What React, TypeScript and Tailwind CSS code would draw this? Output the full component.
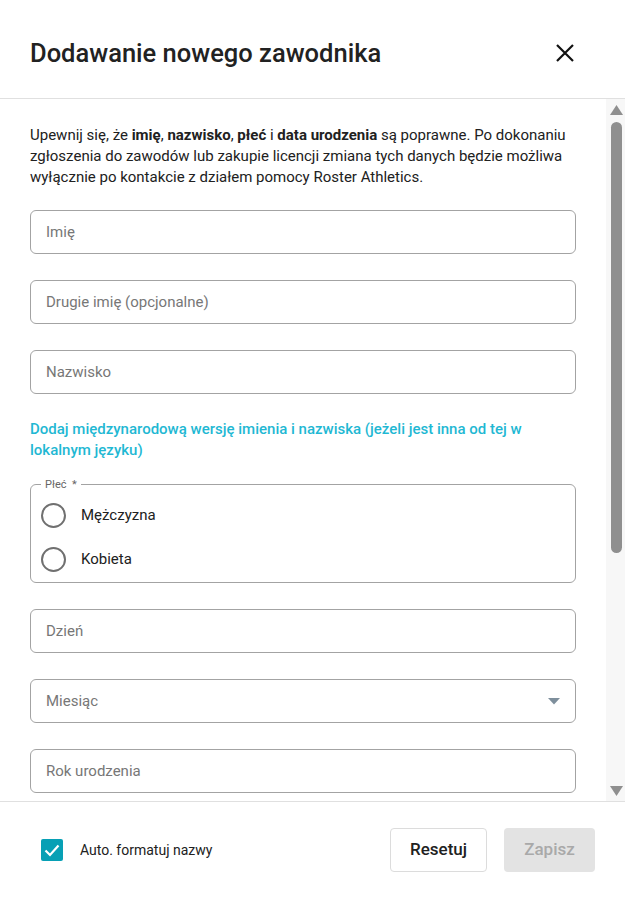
import React from "react";

const font = { fontFamily: "Roboto, 'Noto Sans', sans-serif" };

const TextField = ({ placeholder, select }: { placeholder: string; select?: boolean }) => (
  <div className="flex h-[44px] items-center rounded-[6px] border border-[#a3a3a3] pl-[15px] pr-[15px]">
    <span className="flex-1 text-[15px] text-[#777777]">{placeholder}</span>
    {select && (
      <svg width="12" height="7" viewBox="0 0 12 7">
        <path d="M0 0h12L6 6.5z" fill="#7e8f9c" />
      </svg>
    )}
  </div>
);

const Radio = ({ label }: { label: string }) => (
  <div className="flex h-[44px] items-center">
    <span className="ml-[10px] h-[25px] w-[25px] rounded-full border-2 border-[#707070]" />
    <span className="ml-[15px] text-[15px] text-[#212121]">{label}</span>
  </div>
);

const Scrollbar = () => (
  <div className="flex w-[19px] shrink-0 flex-col items-center bg-[#f7f7f7] pt-[6px] pb-[5px] pl-[1px]">
    <svg width="13" height="10" viewBox="0 0 13 10">
      <path d="M6.5 0L13 10H0z" fill="#8f8f8f" />
    </svg>
    <div className="mt-[7px] h-[431px] w-[11px] rounded-full bg-[#8f8f8f]" />
    <div className="flex-1" />
    <svg width="13" height="10" viewBox="0 0 13 10">
      <path d="M0 0h13L6.5 10z" fill="#8f8f8f" />
    </svg>
  </div>
);

export default function App() {
  return (
    <div className="flex h-[898px] w-full flex-col bg-white text-[#212121]" style={font}>
      <header className="flex h-[99px] shrink-0 items-center justify-between border-b border-[#e0e0e0] pt-[8px] pl-[30px] pr-[51px]">
        <h1 className="text-[25.5px] font-medium text-[#222222]">Dodawanie nowego zawodnika</h1>
        <svg width="18" height="18" viewBox="0 0 18 18">
          <path d="M1 1l16 16M17 1L1 17" stroke="#111" strokeWidth="2.2" />
        </svg>
      </header>

      <div className="flex min-h-0 flex-1">
        <div className="min-w-0 flex-1 overflow-hidden">
          <div className="flex flex-col px-[30px] pt-[26px]">
            <p className="text-[15px] leading-[21px] text-[#212121]">
              Upewnij się, że <b className="font-bold">imię</b>, <b className="font-bold">nazwisko</b>,{" "}
              <b className="font-bold">płeć</b> i <b className="font-bold">data urodzenia</b> są poprawne. Po
              dokonaniu zgłoszenia do zawodów lub zakupie licencji zmiana tych danych będzie możliwa wyłącznie po
              kontakcie z działem pomocy Roster Athletics.
            </p>

            <div className="mt-[22px] flex flex-col gap-[26px]">
              <TextField placeholder="Imię" />
              <TextField placeholder="Drugie imię (opcjonalne)" />
              <TextField placeholder="Nazwisko" />
            </div>

            <p className="mt-[25px] text-[15px] font-medium leading-[21px] text-[#1fb8d3]">
              Dodaj międzynarodową wersję imienia i nazwiska (jeżeli jest inna od tej w lokalnym języku)
            </p>

            <fieldset className="mt-[17px] rounded-[6px] border border-[#a3a3a3] px-0 pt-[2px] pb-[1px]">
              <legend className="ml-[10px] px-[4px] text-[11px] leading-[13px] text-[#666666]">Płeć&nbsp; *</legend>
              <Radio label="Mężczyzna" />
              <Radio label="Kobieta" />
            </fieldset>

            <div className="mt-[26px] flex flex-col gap-[26px]">
              <TextField placeholder="Dzień" />
              <TextField placeholder="Miesiąc" select />
              <TextField placeholder="Rok urodzenia" />
            </div>
          </div>
        </div>
        <Scrollbar />
      </div>

      <footer className="flex h-[97px] shrink-0 items-center border-t border-[#e0e0e0] pl-[41px] pr-[30px]">
        <span className="flex h-[22px] w-[22px] items-center justify-center rounded-[2px] bg-[#07a0b5]">
          <svg width="18" height="18" viewBox="0 0 18 18">
            <path d="M2.5 9.5l4.5 4.5 8.5-9.5" stroke="#fff" strokeWidth="2.2" fill="none" />
          </svg>
        </span>
        <span className="ml-[17px] flex-1 text-[14px] text-[#212121]">Auto. formatuj nazwy</span>
        <button className="h-[44px] w-[97px] rounded-[4px] border border-[#dcdcdc] bg-white text-[17px] font-medium text-[#212121]">
          Resetuj
        </button>
        <button className="ml-[17px] h-[44px] w-[91px] rounded-[4px] bg-[#e3e3e3] text-[17px] font-medium text-[#a9a9a9]">
          Zapisz
        </button>
      </footer>
    </div>
  );
}
